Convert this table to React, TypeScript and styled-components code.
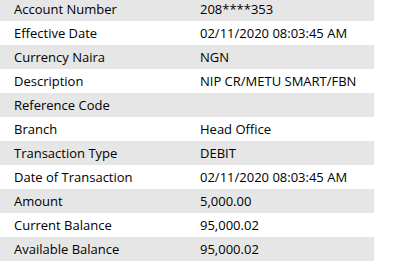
import React from "react";
import styled, { createGlobalStyle } from "styled-components";

type Detail = {
  label: string;
  value: string;
};

const GlobalStyle = createGlobalStyle`
  html, body {
    margin: 0;
    padding: 0;
    background: #ffffff;
  }
  body {
    font-family: "Open Sans", "Liberation Sans", sans-serif;
    color: #000000;
  }
`;

export default function App() {
  const details: Detail[] = [
    { label: "Account Number", value: "208****353" },
    { label: "Effective Date", value: "02/11/2020 08:03:45 AM" },
    { label: "Currency Naira", value: "NGN" },
    { label: "Description", value: "NIP CR/METU SMART/FBN" },
    { label: "Reference Code", value: "" },
    { label: "Branch", value: "Head Office" },
    { label: "Transaction Type", value: "DEBIT" },
    { label: "Date of Transaction", value: "02/11/2020 08:03:45 AM" },
    { label: "Amount", value: "5,000.00" },
    { label: "Current Balance", value: "95,000.02" },
    { label: "Available Balance", value: "95,000.02" },
  ];

  return (
    <>
      <GlobalStyle />
      <DetailTable>
        {details.map((item, index) => (
          <Row key={item.label} $shaded={index % 2 === 0}>
            <Cell>{item.label}</Cell>
            <Cell>{item.value}</Cell>
          </Row>
        ))}
      </DetailTable>
    </>
  );
}

const DetailTable = styled.div`
  display: flex;
  flex-direction: column;
  width: 374px;
  margin-top: -3px;
`;

const Row = styled.div<{ $shaded: boolean }>`
  display: grid;
  grid-template-columns: 186px 188px;
  height: 24px;
  align-items: center;
  background: ${(p) => (p.$shaded ? "#e7e6e6" : "#ffffff")};
`;

const Cell = styled.div`
  padding-left: 14px;
  font-size: 13px;
  line-height: 24px;
  white-space: nowrap;
`;
